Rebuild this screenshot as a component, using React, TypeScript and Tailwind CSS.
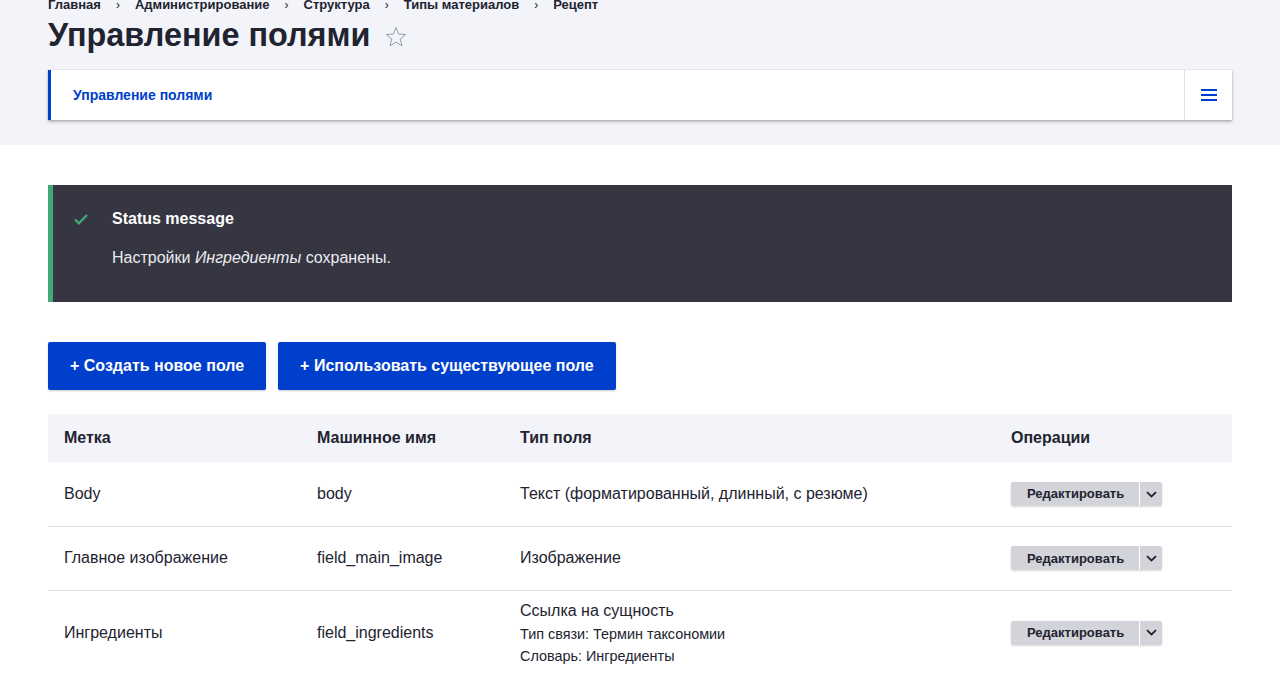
const crumbs = ['Главная', 'Администрирование', 'Структура', 'Типы материалов', 'Рецепт']

const Chevron = () => (
  <svg width="11" height="7" viewBox="0 0 11 7" fill="none">
    <path d="M1 1.2L5.5 5.4L10 1.2" stroke="#222330" strokeWidth="1.8" />
  </svg>
)

const OpButton = () => (
  <div className="inline-flex h-6 rounded-[2px] bg-[#d3d4d9] shadow-[0_1px_2px_rgba(0,0,0,0.15)]">
    <span className="flex items-center pl-4 pr-[15px] text-[13px] font-bold text-[#222330]">Редактировать</span>
    <span className="w-px bg-white" />
    <span className="flex w-[22px] items-center justify-center">
      <Chevron />
    </span>
  </div>
)

const rows = [
  { label: 'Body', machine: 'body', type: 'Текст (форматированный, длинный, с резюме)' },
  { label: 'Главное изображение', machine: 'field_main_image', type: 'Изображение' },
]

export default function App() {
  return (
    <div className="min-h-screen bg-white font-['Liberation_Sans',Arial,sans-serif] text-[#222330]">
      <div className="flex h-[145px] flex-col bg-[#f3f4f9] px-12">
        <nav className="-mt-[5px] flex h-5 items-center text-[13px] font-bold leading-5">
          {crumbs.map((c, i) => (
            <span key={c} className="flex items-center">
              {i > 0 && <span className="mx-[15px] text-[12px] font-normal">›</span>}
              {c}
            </span>
          ))}
        </nav>
        <div className="flex h-10 items-center">
          <h1 className="text-[32.4px] font-bold leading-10">Управление полями</h1>
          <svg className="ml-[14px] mt-1" width="24" height="24" viewBox="0 0 24 24" fill="none">
            <path
              d="M12 2.5l2.6 6.6 7 .4-5.4 4.5 1.8 6.9L12 17.1l-6 3.8 1.8-6.9-5.4-4.5 7-.4z"
              stroke="#9a9ca6"
              strokeWidth="1"
            />
          </svg>
        </div>
        <div className="mt-[15px] flex h-[50px] items-stretch border-l-[3px] border-[#003ecc] bg-white shadow-[0_0_1px_rgba(0,0,0,0.25),0_2px_3px_rgba(0,0,0,0.25)]">
          <div className="flex flex-1 items-center pl-[22px] text-sm font-bold text-[#003ecc]">Управление полями</div>
          <div className="flex w-12 items-center justify-center border-l border-[#dedfe4]">
            <div className="flex w-4 flex-col gap-[3px]">
              <span className="h-[2px] bg-[#003ecc]" />
              <span className="h-[2px] bg-[#003ecc]" />
              <span className="h-[2px] bg-[#003ecc]" />
            </div>
          </div>
        </div>
      </div>

      <main className="px-12 pt-10">
        <div className="flex border-l-[5px] border-[#42a877] bg-[#353641] pb-8 pl-5 pt-[22px]">
          <svg className="mt-[5px]" width="16" height="14" viewBox="0 0 16 14" fill="none">
            <path d="M2 7.5l3.8 3.8L14 3" stroke="#42a877" strokeWidth="2.4" />
          </svg>
          <div className="ml-[23px]">
            <div className="font-bold leading-6 text-white">Status message</div>
            <div className="mt-[15px] leading-6 text-[#ececf0]">
              Настройки <em>Ингредиенты</em> сохранены.
            </div>
          </div>
        </div>

        <div className="mt-10 flex gap-3">
          <button className="h-12 rounded-[2px] bg-[#003ecc] px-[22px] font-bold text-white shadow-[0_1px_2px_rgba(0,0,0,0.2)]">
            + Создать новое поле
          </button>
          <button className="h-12 rounded-[2px] bg-[#003ecc] px-[22px] font-bold text-white shadow-[0_1px_2px_rgba(0,0,0,0.2)]">
            + Использовать существующее поле
          </button>
        </div>

        <table className="mt-6 w-full border-collapse text-left">
          <colgroup>
            <col className="w-[253px]" />
            <col className="w-[203px]" />
            <col className="w-[491px]" />
            <col />
          </colgroup>
          <thead>
            <tr className="h-12 bg-[#f3f4f9]">
              <th className="px-4 font-bold">Метка</th>
              <th className="px-4 font-bold">Машинное имя</th>
              <th className="px-4 font-bold">Тип поля</th>
              <th className="px-4 font-bold">Операции</th>
            </tr>
          </thead>
          <tbody>
            {rows.map((r) => (
              <tr key={r.machine} className="h-16 border-b border-[#dedfe4]">
                <td className="px-4 py-2">{r.label}</td>
                <td className="px-4 py-2">{r.machine}</td>
                <td className="px-4 py-2">{r.type}</td>
                <td className="px-4 py-2">
                  <OpButton />
                </td>
              </tr>
            ))}
            <tr className="border-b border-[#dedfe4]">
              <td className="px-4 py-2">Ингредиенты</td>
              <td className="px-4 py-2">field_ingredients</td>
              <td className="px-4 py-2">
                <div className="leading-6">Ссылка на сущность</div>
                <div className="text-[14.4px] leading-[22px]">Тип связи: Термин таксономии</div>
                <div className="text-[14.4px] leading-[22px]">Словарь: Ингредиенты</div>
              </td>
              <td className="px-4 py-2">
                <OpButton />
              </td>
            </tr>
          </tbody>
        </table>
      </main>
    </div>
  )
}
